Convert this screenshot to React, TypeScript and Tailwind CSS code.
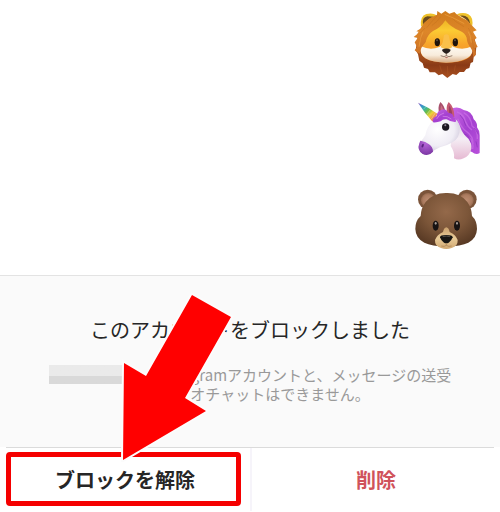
import React from 'react';

const LionEmoji: React.FC = () => (
  <svg viewBox="0 0 270 270" className="size-[90px]" role="img" aria-label="lion">
    <defs>
      <linearGradient id="lionBeard" x1="0" y1="0" x2="0" y2="1">
        <stop offset="0" stopColor="#c06a24" />
        <stop offset="0.6" stopColor="#a04c1b" />
        <stop offset="0.75" stopColor="#8a3a16" />
        <stop offset="1" stopColor="#a9501f" />
      </linearGradient>
      <linearGradient id="lionFace" x1="0" y1="0" x2="0" y2="1">
        <stop offset="0" stopColor="#e9a91f" />
        <stop offset="0.3" stopColor="#fbcb33" />
        <stop offset="0.6" stopColor="#f8a52b" />
        <stop offset="1" stopColor="#ef8a2c" />
      </linearGradient>
      <linearGradient id="lionCheek" x1="0" y1="0" x2="0" y2="1">
        <stop offset="0" stopColor="#fffdf8" />
        <stop offset="0.6" stopColor="#f8ecdc" />
        <stop offset="1" stopColor="#d9ae84" />
      </linearGradient>
      <linearGradient id="lionHair" x1="0" y1="0" x2="0" y2="1">
        <stop offset="0" stopColor="#d07c1d" />
        <stop offset="0.45" stopColor="#dd8629" />
        <stop offset="1" stopColor="#cc7026" />
      </linearGradient>
    </defs>
    <path
      d="M60 80 L190 80 L208 110 L214 140 L212 165 L206 172 L204 186 L197 189 L193 204 L184 207 L177 216 L164 216 L154 225 L143 222 L127 234 L112 222 L101 226 L90 217 L74 217 L69 207 L57 203 L53 190 L43 182 L39 163 L32 150 L38 110 Z"
      fill="url(#lionBeard)"
    />
    <path d="M48 80 Q44 48 64 42 Q83 37 95 46 L73 60 Z" fill="#efc22a" />
    <path d="M54 74 Q50 52 67 49 L86 50 Q66 58 54 74 Z" fill="#6b4a1c" />
    <path d="M155 43 Q175 35 190 43 Q207 52 201 82 L187 61 Z" fill="#efc22a" />
    <path d="M165 47 Q192 43 196 72 Q183 54 165 47 Z" fill="#6b4a1c" />
    <path
      d="M70 84 Q102 50 125 50 Q158 55 180 86 Q189 101 190 126 Q205 146 200 161 Q190 187 124 188 Q58 186 48 160 Q44 144 61 127 Q61 101 70 84 Z"
      fill="url(#lionFace)"
    />
    <path
      d="M48 139 Q76 152 103 141 Q112 132 124 132 Q136 132 146 141 Q173 152 202 139 Q207 163 187 174 Q161 188 124 188 Q84 188 61 175 Q42 163 48 139 Z"
      fill="url(#lionCheek)"
    />
    <path d="M107 142 Q115 126 117 106 Q124 100 131 106 Q134 126 142 142 Q132 148 124 148 Q115 147 107 142 Z" fill="#fac04a" />
    <path
      d="M97 33 L109 41 L121 33 L133 41 L148 36 L155 43 L171 53 L186 61 L197 73 L215 91 L204 95 L215 114 L208 119 L218 141 L209 144 L213 163 L204 172 Q206 157 197 143 Q186 130 185 113 Q180 98 164 92 Q138 83 121 61 Q107 84 84 93 Q67 104 62 125 Q50 138 46 151 L45 161 L36 157 L29 151 L36 141 L29 127 L38 114 L26 111 L36 103 L41 95 L34 94 L46 86 L56 70 L75 54 L96 44 Z"
      fill="url(#lionHair)"
    />
    <path
      d="M97 47 Q82 62 65 83 M133 47 Q151 67 177 80 M45 100 L60 84 M190 84 L202 106 M43 125 L51 107 M201 117 L206 146 M107 50 Q98 65 80 77"
      fill="none"
      stroke="#bf6c1c"
      strokeWidth="2"
      opacity="0.6"
    />
    <path
      d="M119 43 Q148 54 178 71 M190 95 Q197 107 199 128 M54 95 Q45 115 42 140"
      fill="none"
      stroke="#f0a544"
      strokeWidth="3"
      opacity="0.6"
    />
    <path d="M104 196 L110 215 M127 198 L129 224 M151 196 L148 214" stroke="#b9622a" strokeWidth="3" opacity="0.35" />
    <ellipse cx="97" cy="127" rx="8" ry="12" fill="#20130b" />
    <ellipse cx="151" cy="127" rx="8" ry="12" fill="#20130b" />
    <ellipse cx="96" cy="121" rx="2" ry="3" fill="#7b6c5b" />
    <ellipse cx="150" cy="121" rx="2" ry="3" fill="#7b6c5b" />
    <path d="M111 149 Q124 142 137 149 Q136 156 124 162 Q112 156 111 149 Z" fill="#28201c" />
    <path d="M124 160 V167 M107 167 Q118 173 124 167 Q131 173 142 167" fill="none" stroke="#6b5040" strokeWidth="2" />
    <path d="M119 171 Q124 178 130 171" fill="#b97368" />
  </svg>
);

const UnicornEmoji: React.FC = () => (
  <svg viewBox="0 0 270 270" className="size-[90px]" role="img" aria-label="unicorn">
    <defs>
      <linearGradient id="horn" x1="40" y1="40" x2="91" y2="94" gradientUnits="userSpaceOnUse">
        <stop offset="0" stopColor="#8a55bd" />
        <stop offset="0.16" stopColor="#3a92cf" />
        <stop offset="0.34" stopColor="#39b59b" />
        <stop offset="0.5" stopColor="#76bd3f" />
        <stop offset="0.66" stopColor="#edd33b" />
        <stop offset="0.82" stopColor="#f2934c" />
        <stop offset="1" stopColor="#de648b" />
      </linearGradient>
      <radialGradient id="uniHead" cx="0.45" cy="0.35" r="0.7">
        <stop offset="0" stopColor="#ffffff" />
        <stop offset="0.6" stopColor="#f0edf5" />
        <stop offset="1" stopColor="#c4bbd2" />
      </radialGradient>
      <linearGradient id="uniNeck" x1="0" y1="0" x2="0" y2="1">
        <stop offset="0" stopColor="#d5cede" />
        <stop offset="0.5" stopColor="#f5eef5" />
        <stop offset="1" stopColor="#e6b9d2" />
      </linearGradient>
      <linearGradient id="uniMane" x1="0" y1="0" x2="1" y2="1">
        <stop offset="0" stopColor="#c967e6" />
        <stop offset="0.5" stopColor="#a440d0" />
        <stop offset="1" stopColor="#b850db" />
      </linearGradient>
      <radialGradient id="uniNose" cx="0.5" cy="0.2" r="0.8">
        <stop offset="0" stopColor="#b565d8" />
        <stop offset="1" stopColor="#7c37a4" />
      </radialGradient>
    </defs>
    <path d="M39 38 Q67 50 97 71 L84 97 Q58 68 39 38 Z" fill="url(#horn)" />
    <path d="M55 58 L63 50 M66 72 L77 58 M79 87 L91 69" stroke="#fff" strokeWidth="2" opacity="0.45" />
    <path
      d="M142 55 Q161 48 176 60 Q200 63 206 88 Q218 98 216 112 Q224 121 224 136 V189 Q213 196 201 186 Q188 183 188 164 Q167 145 161 111 L143 76 Z"
      fill="url(#uniMane)"
    />
    <path
      d="M145 84 Q160 90 166 112 Q172 132 190 146 Q201 160 199 176 Q195 196 176 205 Q160 212 147 205 Q150 187 137 168 Z"
      fill="url(#uniNeck)"
    />
    <path
      d="M86 91 Q104 72 137 78 Q162 90 164 116 Q165 146 140 158 Q126 166 105 172 Q86 180 76 191 Q63 198 51 190 Q37 177 44 159 Q53 149 61 136 Q66 108 86 91 Z"
      fill="url(#uniHead)"
    />
    <path d="M46 152 Q62 154 72 163 Q84 172 84 185 Q70 201 53 192 Q35 181 43 160 Z" fill="url(#uniNose)" />
    <ellipse cx="53" cy="167" rx="3" ry="6" transform="rotate(20 53 167)" fill="#5a2280" />
    <path d="M103 72 Q97 51 106 36 Q119 47 121 66 L114 79 Z" fill="#a8506c" />
    <path d="M109 69 Q105 54 108 45 Q117 57 116 72 Z" fill="#c96d87" />
    <path d="M127 71 Q121 51 131 36 Q148 51 148 80 L139 89 Z" fill="#c55a72" />
    <path d="M134 76 Q130 57 133 47 Q143 61 141 79 Z" fill="#9c4060" />
    <path
      d="M84 97 Q80 84 95 78 Q96 62 111 59 Q122 54 130 68 Q145 69 146 82 Q156 88 152 96 Q138 97 125 88 Q114 86 107 94 Q96 98 84 97 Z"
      fill="url(#uniMane)"
    />
    <path d="M95 87 Q101 73 117 69 M113 79 Q127 77 139 87" fill="none" stroke="#dd91f0" strokeWidth="3" opacity="0.6" />
    <path
      d="M156 66 Q176 72 181 94 Q187 110 201 120 M158 86 Q169 114 184 124 Q205 138 204 162 M176 68 Q198 81 201 107 Q219 121 217 147 M192 143 Q207 155 203 177"
      fill="none"
      stroke="#cf75ea"
      strokeWidth="4"
      opacity="0.6"
    />
    <path
      d="M165 75 Q178 87 182 107 M178 132 Q194 137 197 157 M207 114 Q215 122 220 133 M213 154 L217 172"
      fill="none"
      stroke="#8530b4"
      strokeWidth="3"
      opacity="0.6"
    />
    <circle cx="122" cy="111" r="11" fill="#1c1821" />
    <circle cx="121" cy="106" r="3" fill="#8e8896" />
  </svg>
);

const BearEmoji: React.FC = () => (
  <svg viewBox="0 0 270 270" className="size-[90px]" role="img" aria-label="bear">
    <defs>
      <radialGradient id="bearHead" cx="0.5" cy="0.35" r="0.65">
        <stop offset="0" stopColor="#94694a" />
        <stop offset="0.55" stopColor="#7c5639" />
        <stop offset="1" stopColor="#5a3b25" />
      </radialGradient>
      <radialGradient id="bearEar" cx="0.5" cy="0.5" r="0.6">
        <stop offset="0" stopColor="#bd8d72" />
        <stop offset="0.6" stopColor="#ac7c60" />
        <stop offset="1" stopColor="#855b41" />
      </radialGradient>
      <linearGradient id="bearMuzzle" x1="0" y1="0" x2="0" y2="1">
        <stop offset="0" stopColor="#c99f6c" />
        <stop offset="0.5" stopColor="#e9cb98" />
        <stop offset="1" stopColor="#d0a871" />
      </linearGradient>
    </defs>
    <circle cx="68" cy="58" r="29" fill="#7b543a" />
    <circle cx="186" cy="58" r="29" fill="#7b543a" />
    <circle cx="70" cy="61" r="22" fill="url(#bearEar)" />
    <circle cx="184" cy="61" r="22" fill="url(#bearEar)" />
    <path
      d="M125 39 Q165 38 187 66 Q200 84 201 108 Q216 122 216 147 Q215 175 190 188 Q168 198 124 200 Q80 198 58 188 Q32 175 31 147 Q31 122 47 108 Q48 84 62 66 Q85 38 125 39 Z"
      fill="url(#bearHead)"
    />
    <path
      d="M124 142 Q131 143 134 156 Q152 164 158 180 Q159 199 140 204 Q132 207 124 207 Q116 207 108 204 Q89 199 90 180 Q96 164 114 156 Q117 143 124 142 Z"
      fill="url(#bearMuzzle)"
    />
    <path d="M105 172 Q105 165 124 165 Q143 165 143 172 Q141 180 131 188 Q124 192 117 188 Q107 180 105 172 Z" fill="#171512" />
    <path d="M113 170 Q124 167 135 170" fill="none" stroke="#6d6860" strokeWidth="2" />
    <path d="M124 190 V196 M109 198 Q118 201 124 196 Q131 201 140 198" fill="none" stroke="#a67c4f" strokeWidth="2" />
    <ellipse cx="92" cy="137" rx="9" ry="15" fill="#171313" />
    <ellipse cx="156" cy="137" rx="9" ry="15" fill="#171313" />
    <ellipse cx="92" cy="130" rx="3" ry="4" fill="#a69d97" />
    <ellipse cx="156" cy="130" rx="3" ry="4" fill="#a69d97" />
  </svg>
);

const PointerArrow: React.FC = () => (
  <svg
    viewBox="0 0 116 172"
    className="pointer-events-none absolute left-[120px] top-[15px] z-10 h-[172px] w-[116px]"
    aria-hidden="true"
  >
    <path
      d="M72 5 L111 27 L65 108 L86 121 L3 170 L4 73 L26 86 Z"
      fill="#ff0000"
      stroke="#fcfcfc"
      strokeWidth="4"
      paintOrder="stroke"
    />
  </svg>
);

export default function App() {
  return (
    <div className="min-h-screen bg-white font-['Noto_Sans_CJK_JP',sans-serif]">
      <div className="flex flex-col items-end pb-[5px] pr-[5px]">
        <LionEmoji />
        <UnicornEmoji />
        <BearEmoji />
      </div>

      <div className="relative">
        <section className="border-t border-[#e3e3e3] bg-[#fafafa] pb-11 pt-10 text-center">
          <h1 className="text-xl leading-7 text-[#262626]">このアカウントをブロックしました</h1>
          <p className="mt-[21px] whitespace-nowrap text-[15px] leading-[19px] text-[#999999]">
            <span className="mr-8 inline-block h-[19px] w-[76px] bg-linear-to-b from-[#eaeaea] from-60% to-[#d9d9d9] to-60% align-top" />
            Instagramアカウントと、メッセージの送受
            <br />
            信、ビデオチャットはできません。
          </p>
        </section>

        <div className="mx-[6px] border-t border-[#dbdbdb]" />
        <div className="grid grid-cols-2">
          <div className="relative">
            <button type="button" className="h-[63px] w-full text-xl font-bold text-[#262626]">
              ブロックを解除
            </button>
            <span className="pointer-events-none absolute bottom-[5px] left-[6px] right-[9px] top-1 rounded-[4px] border-5 border-[#f50000]" />
          </div>
          <button type="button" className="h-[63px] border-l-2 border-[#f6f4fa] text-xl font-bold text-[#d0535b]">
            削除
          </button>
        </div>
        <PointerArrow />
      </div>
    </div>
  );
}
